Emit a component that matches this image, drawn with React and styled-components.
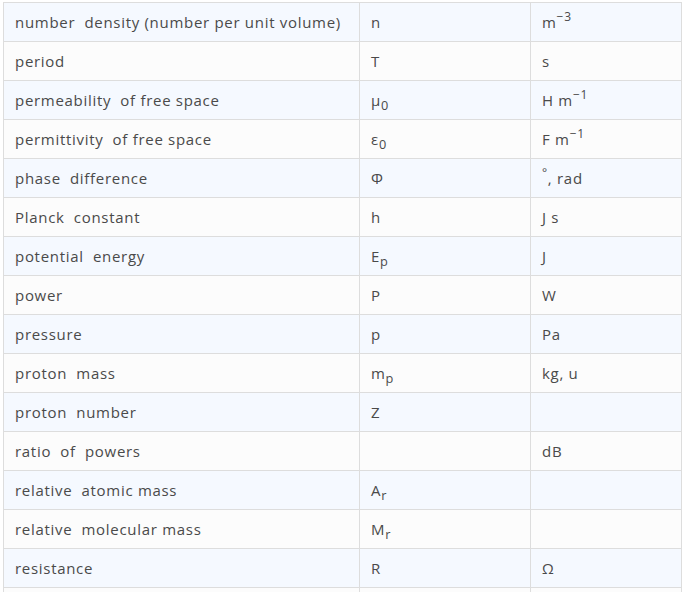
import React from "react";
import styled, { createGlobalStyle } from "styled-components";

const Global = createGlobalStyle`
  html, body { margin: 0; padding: 0; background: #ffffff; }
  body { font-family: "Open Sans", "Noto Sans", "Liberation Sans", sans-serif; }
`;

const Page = styled.div`
  padding: 2px 0 0 3px;
`;

const Table = styled.table`
  border-collapse: collapse;
  table-layout: fixed;
  width: 678px;
  font-size: 15px;
  letter-spacing: 0.7px;
  color: #4a4a4a;
`;

const Col = styled.col`
  width: ${(p) => p.$w}px;
`;

const Row = styled.tr`
  background: ${(p) => (p.$alt ? "#f5f9ff" : "#fcfcfc")};
`;

const Cell = styled.td`
  border: 1px solid #dddddd;
  padding: 8px 10px 8px 11px;
  line-height: 22px;
  white-space: pre-wrap;
  vertical-align: middle;
`;

const Sup = styled.sup`
  font-size: 0.8em;
  line-height: 0;
  vertical-align: 0.55em;
`;

const Sub = styled.sub`
  font-size: 0.85em;
  line-height: 0;
  vertical-align: -0.3em;
`;

const rows = [
  ["number  density (number per unit volume)", "n", <>m<Sup>−3</Sup></>],
  ["period", "T", "s"],
  ["permeability  of free space", <>μ<Sub>0</Sub></>, <>H m<Sup>−1</Sup></>],
  ["permittivity  of free space", <>ε<Sub>0</Sub></>, <>F m<Sup>−1</Sup></>],
  ["phase  difference", "Φ", <><Sup>°</Sup>, rad</>],
  ["Planck  constant", "h", "J s"],
  ["potential  energy", <>E<Sub>p</Sub></>, "J"],
  ["power", "P", "W"],
  ["pressure", "p", "Pa"],
  ["proton  mass", <>m<Sub>p</Sub></>, "kg, u"],
  ["proton  number", "Z", ""],
  ["ratio  of  powers", "", "dB"],
  ["relative  atomic mass", <>A<Sub>r</Sub></>, ""],
  ["relative  molecular mass", <>M<Sub>r</Sub></>, ""],
  ["resistance", "R", "Ω"],
  ["", "", ""],
];

export default function App() {
  return (
    <>
      <Global />
      <Page>
        <Table>
          <colgroup>
            <Col $w={356} />
            <Col $w={171} />
            <Col $w={151} />
          </colgroup>
          <tbody>
            {rows.map((r, i) => (
              <Row key={i} $alt={i % 2 === 0}>
                <Cell>{r[0]}</Cell>
                <Cell>{r[1]}</Cell>
                <Cell>{r[2]}</Cell>
              </Row>
            ))}
          </tbody>
        </Table>
      </Page>
    </>
  );
}
